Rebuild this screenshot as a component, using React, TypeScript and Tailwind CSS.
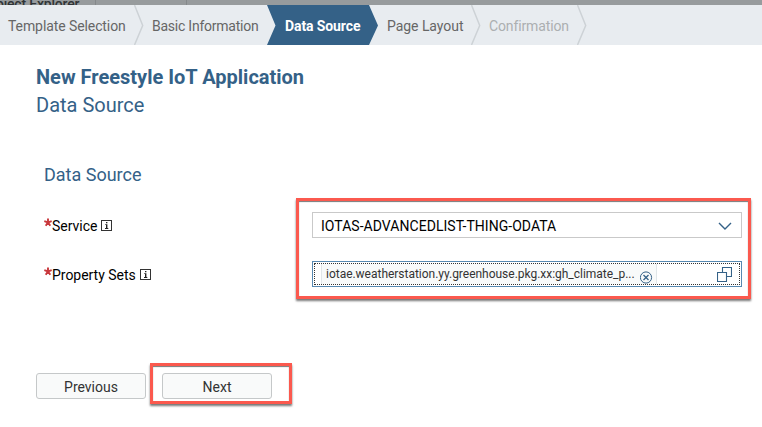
import React from "react";

function Chevron() {
  return (
    <svg className="h-10 w-[10px] shrink-0" viewBox="0 0 10 40" fill="none">
      <path d="M0.5 0L8.7 20.5L0.5 40" stroke="#cdd2d6" strokeWidth="1.5" />
    </svg>
  );
}

function InfoIcon() {
  return (
    <svg className="h-[11px] w-[11px] shrink-0" viewBox="0 0 11 11" fill="none">
      <rect x="0.5" y="0.5" width="10" height="10" stroke="#333" />
      <path d="M5 2h1.4v1.3H5zM4.2 4.2h2.2v3.9h.9V9H4v-.9h1V5h-.8z" fill="#222" />
    </svg>
  );
}

function Asterisk() {
  return (
    <svg className="mt-[2px] h-[9px] w-[8px] shrink-0" viewBox="0 0 8 9" fill="none">
      <path d="M4 0.5V4.4M0.3 3.2L4 4.4L7.7 3.2M1.7 7.8L4 4.4L6.3 7.8" stroke="#c8383c" strokeWidth="1.9" />
    </svg>
  );
}

function WizardNav() {
  return (
    <nav className="flex h-10 items-center bg-[#e8ecf0] pl-2 text-sm leading-5 whitespace-nowrap text-[#666]">
      <span className="w-[126px] pt-[2px] tracking-[-0.09px]">Template Selection</span>
      <Chevron />
      <span className="w-[123px] pt-[2px] pl-2 tracking-[-0.24px]">Basic Information</span>
      <div className="relative h-10 w-[111px] shrink-0">
        <svg className="absolute inset-0 h-10 w-[111px]" viewBox="0 0 111 40">
          <path d="M0 0H102L111 20.5L102 40H0L8.5 20.5Z" fill="#346187" />
        </svg>
        <span className="relative block pt-[11px] pl-[18px] font-bold tracking-[-0.1px] text-white">Data Source</span>
      </div>
      <span className="w-[93px] pt-[2px] pl-[9px] tracking-[-0.05px]">Page Layout</span>
      <Chevron />
      <span className="w-[96px] pt-[2px] pl-2 tracking-[-0.13px] text-[#acafb1]">Confirmation</span>
      <Chevron />
    </nav>
  );
}

function FieldLabel({ text }: { text: string }) {
  return (
    <div className="flex h-[26px] items-start pt-[4px] whitespace-nowrap">
      <Asterisk />
      <span className="mr-1 text-sm leading-5 tracking-[-0.03px] text-black">{text}</span>
      <span className="pt-[4px]">
        <InfoIcon />
      </span>
    </div>
  );
}

const frame = "border-[3px] border-[#fb594e] shadow-[0_2px_2px_#777,inset_0_1px_1px_#777]";
const button =
  "block h-[26px] w-[110px] rounded-[3px] border border-[#c5c8c9] bg-[#f9fafa] pt-px text-sm leading-5 text-[#333]";

export default function App() {
  return (
    <div className="h-[427px] w-[762px] overflow-hidden bg-white font-[Roboto,sans-serif]">
      <div className="flex h-[5px] overflow-hidden bg-[#979b9d]">
        <div className="-mt-[5px] w-[95px] text-sm leading-[18px] font-medium tracking-[-0.2px] whitespace-nowrap text-[#303436]">
          <span className="-ml-[4px]">oject Explorer</span>
        </div>
        <div className="w-[92px] border-x border-[#85898b]" />
      </div>
      <WizardNav />
      <main>
        <header className="h-[118px] pt-[18px] pl-9 whitespace-nowrap text-[#346187]">
          <h1 className="text-[20px] leading-[28px] font-bold">New Freestyle IoT Application</h1>
          <h2 className="text-[20px] leading-[28px]">Data Source</h2>
        </header>
        <h3 className="h-[35px] pl-11 text-lg leading-6 text-[#346187]">Data Source</h3>
        <section className="flex">
          <div className="flex w-[296px] flex-col gap-[23px] pt-[14px] pl-11">
            <FieldLabel text="Service" />
            <FieldLabel text="Property Sets" />
          </div>
          <div className={`flex h-[101px] w-[455px] flex-col gap-[23px] px-[13px] pt-[11px] ${frame}`}>
            <div className="flex h-[26px] w-[430px] shrink-0 items-center justify-between border border-[#c9c9c9] bg-white pr-[9px] pl-2">
              <span className="pt-[2px] text-sm leading-5 tracking-[0.04px] whitespace-nowrap text-black">
                IOTAS-ADVANCEDLIST-THING-ODATA
              </span>
              <svg className="mt-[2px] h-[8px] w-[14px]" viewBox="0 0 14 8" fill="none">
                <path d="M1 1L7 7L13 1" stroke="#346187" strokeWidth="1.4" />
              </svg>
            </div>
            <div className="h-[26px] w-[430px] shrink-0 border border-[#5789b1] bg-white p-px">
              <div className="flex h-[22px] items-center border border-dotted border-[#333]">
                <div className="ml-[6px] flex h-5 w-[336px] border-x border-[#e0e6e8] bg-[#f8fafa] pl-1">
                  <span className="w-[314px] pt-px text-xs leading-[19px] tracking-[-0.02px] whitespace-nowrap text-[#333]">
                    iotae.weatherstation.yy.greenhouse.pkg.xx:gh_climate_p...
                  </span>
                  <svg className="mt-[7px] h-[13px] w-[13px] shrink-0" viewBox="0 0 13 13" fill="none">
                    <circle cx="6" cy="6.5" r="5.6" stroke="#346187" />
                    <path d="M3.5 4L8.5 9M8.5 4L3.5 9" stroke="#346187" strokeWidth="1.3" />
                  </svg>
                </div>
                <svg className="ml-[60px] h-[15px] w-[15px] shrink-0" viewBox="0 0 15 15" fill="none">
                  <path d="M5.5 5V0.5H14.5V9.5H9.5M0.5 5.5H9.5V14.5H0.5Z" stroke="#346187" strokeWidth="1.1" />
                </svg>
              </div>
            </div>
          </div>
        </section>
        <footer className="flex pt-[64px] pl-9">
          <div className="w-[114px] pt-[10px]">
            <button className={button}>Previous</button>
          </div>
          <div className={`h-[41px] w-[142px] pt-[7px] pl-[9px] ${frame}`}>
            <button className={button}>Next</button>
          </div>
        </footer>
      </main>
    </div>
  );
}
